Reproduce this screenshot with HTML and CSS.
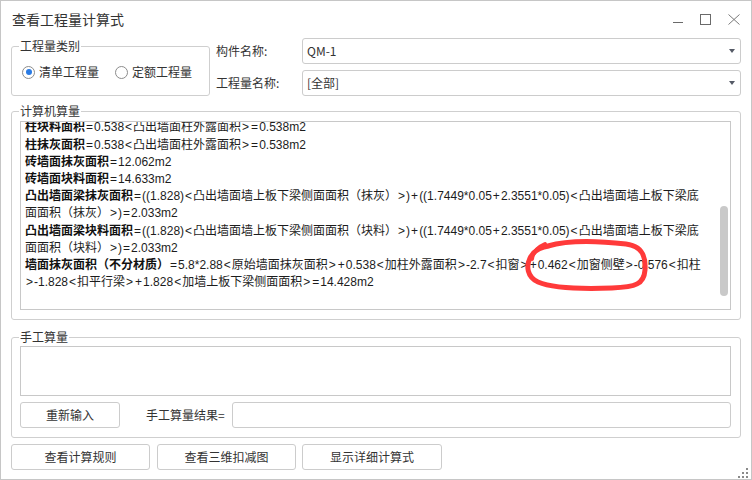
FILE: index.html
```html
<!DOCTYPE html>
<html lang="zh-CN">
<head>
<meta charset="utf-8">
<title>查看工程量计算式</title>
<link rel="stylesheet" href="styles.css">
</head>
<body>
<div class="window">
  <div class="titlebar">
    <span class="title">查看工程量计算式</span>
    <div class="controls">
      <svg class="ctl ctl-min" width="10" height="11" viewBox="0 0 10 11"><line x1="0" y1="8.5" x2="10" y2="8.5" stroke="#6a6a6a" stroke-width="1"/></svg>
      <svg class="ctl ctl-max" width="11" height="11" viewBox="0 0 11 11"><rect x="0.5" y="0.5" width="10" height="10" fill="none" stroke="#6a6a6a" stroke-width="1"/></svg>
      <svg class="ctl ctl-close" width="12" height="11" viewBox="0 0 12 11"><path d="M0.5 0.5 L11.5 10.5 M11.5 0.5 L0.5 10.5" stroke="#7a7a7a" stroke-width="1" fill="none"/></svg>
    </div>
  </div>

  <div class="content">
    <div class="top-row">
      <div class="group type-group">
        <span class="group-label">工程量类别</span>
        <div class="radio checked"><span class="circle"></span><span>清单工程量</span></div>
        <div class="radio"><span class="circle"></span><span>定额工程量</span></div>
      </div>
      <div class="fields">
        <div class="field">
          <span class="field-label">构件名称:</span>
          <div class="combo"><span class="combo-text">QM-1</span><span class="arrow"></span></div>
        </div>
        <div class="field">
          <span class="field-label">工程量名称:</span>
          <div class="combo"><span class="combo-text">[全部]</span><span class="arrow"></span></div>
        </div>
      </div>
    </div>

    <div class="group calc-group">
      <span class="group-label">计算机算量</span>
      <div class="calc-box">
        <div class="calc-text">
          <div class="line"><b>柱块料面积</b><i class="o">=</i>0.538<i class="o">&lt;</i>凸出墙面柱外露面积<i class="o">&gt;</i><i class="o">=</i>0.538m2</div>
          <div class="line"><b>柱抹灰面积</b><i class="o">=</i>0.538<i class="o">&lt;</i>凸出墙面柱外露面积<i class="o">&gt;</i><i class="o">=</i>0.538m2</div>
          <div class="line"><b>砖墙面抹灰面积</b><i class="o">=</i>12.062m2</div>
          <div class="line"><b>砖墙面块料面积</b><i class="o">=</i>14.633m2</div>
          <div class="line"><b>凸出墙面梁抹灰面积</b><i class="o">=</i>((1.828)<i class="o">&lt;</i>凸出墙面墙上板下梁侧面面积（抹灰）<i class="o">&gt;</i>)<i class="o">+</i>((1.7449*0.05<i class="o">+</i>2.3551*0.05)<i class="o">&lt;</i>凸出墙面墙上板下梁底<br>面面积（抹灰）<i class="o">&gt;</i>)<i class="o">=</i>2.033m2</div>
          <div class="line"><b>凸出墙面梁块料面积</b><i class="o">=</i>((1.828)<i class="o">&lt;</i>凸出墙面墙上板下梁侧面面积（块料）<i class="o">&gt;</i>)<i class="o">+</i>((1.7449*0.05<i class="o">+</i>2.3551*0.05)<i class="o">&lt;</i>凸出墙面墙上板下梁底<br>面面积（块料）<i class="o">&gt;</i>)<i class="o">=</i>2.033m2</div>
          <div class="line"><b>墙面抹灰面积（不分材质）</b><i class="o">=</i>5.8*2.88<i class="o">&lt;</i>原始墙面抹灰面积<i class="o">&gt;</i><i class="o">+</i>0.538<i class="o">&lt;</i>加柱外露面积<i class="o">&gt;</i>-2.7<i class="o">&lt;</i>扣窗<i class="o">&gt;</i><i class="o">+</i>0.462<i class="o">&lt;</i>加窗侧壁<i class="o">&gt;</i>-0.576<i class="o">&lt;</i>扣柱<br><i class="o">&gt;</i>-1.828<i class="o">&lt;</i>扣平行梁<i class="o">&gt;</i><i class="o">+</i>1.828<i class="o">&lt;</i>加墙上板下梁侧面面积<i class="o">&gt;</i><i class="o">=</i>14.428m2</div>
        </div>
        <div class="scroll-thumb"></div>
      </div>
    </div>

    <div class="group manual-group">
      <span class="group-label">手工算量</span>
      <div class="manual-area"></div>
      <div class="manual-row">
        <div class="btn btn-reset">重新输入</div>
        <span class="result-label">手工算量结果=</span>
        <div class="result-input"></div>
      </div>
    </div>

    <div class="bottom-buttons">
      <div class="btn btn-bottom">查看计算规则</div>
      <div class="btn btn-bottom">查看三维扣减图</div>
      <div class="btn btn-bottom btn-wide">显示详细计算式</div>
    </div>
  </div>

  <svg class="annotation" width="752" height="480" viewBox="0 0 752 480">
    <path d="M548 246 C568 240 600 241 626 244 C642 246 646 256 645 270 C644 284 636 287 612 288 C585 289 552 288 538 282 C527 277 526 266 530 258 C534 250 540 247 549 246" fill="none" stroke="#ff3a3a" stroke-width="5" stroke-linecap="round" stroke-linejoin="round"/>
    <path d="M545 244 C538 247 533 252 532 259" fill="none" stroke="#ff3a3a" stroke-width="4" stroke-linecap="round"/>
  </svg>

  <div class="grip">
    <span class="dot d1"></span><span class="dot d2"></span><span class="dot d3"></span>
    <span class="dot d4"></span><span class="dot d5"></span><span class="dot d6"></span>
  </div>
</div>
</body>
</html>
```

FILE: styles.css
```css
* { box-sizing: border-box; }

html, body {
  margin: 0;
  padding: 0;
  background: #ffffff;
}

body {
  font-family: "Noto Sans CJK SC", "Microsoft YaHei", "Noto Sans", sans-serif;
  font-size: 12px;
  color: #333333;
}

.window {
  position: relative;
  width: 752px;
  height: 480px;
  border: 1px solid #c6c6c6;
  background: #ffffff;
  overflow: hidden;
}

/* title bar */
.titlebar {
  height: 37px;
  display: flex;
  align-items: flex-start;
  padding: 0 11px 0 11px;
}

.title {
  font-size: 14px;
  line-height: 37px;
  color: #333333;
}

.controls {
  margin-left: auto;
  display: flex;
  align-items: flex-start;
  padding-top: 13px;
}

.ctl { display: block; }
.ctl-min { margin-right: 17px; }
.ctl-max { margin-right: 17px; }

/* content */
.content {
  padding: 0 10px;
}

.top-row {
  display: flex;
  height: 58px;
}

.group {
  position: relative;
  border: 1px solid #cfcfcf;
  border-radius: 3px;
}

.group-label {
  position: absolute;
  left: 7px;
  top: -9px;
  padding: 0 1px;
  background: #ffffff;
  line-height: 16px;
  color: #333333;
}

.type-group {
  margin-top: 8px;
  width: 199px;
  height: 50px;
  display: flex;
  align-items: center;
  padding: 2px 0 0 10px;
}

.radio {
  display: flex;
  align-items: center;
  line-height: 16px;
  color: #333333;
  margin-right: 16px;
}

.circle {
  position: relative;
  width: 13px;
  height: 13px;
  border: 1px solid #8c8c8c;
  border-radius: 50%;
  margin-right: 4px;
  background: #ffffff;
}

.radio.checked .circle::after {
  content: "";
  position: absolute;
  left: 2.5px;
  top: 2.5px;
  width: 6px;
  height: 6px;
  border-radius: 50%;
  background: #2a7be4;
}

.fields {
  margin-left: 6px;
  flex: 1;
  display: flex;
  flex-direction: column;
}

.field {
  display: flex;
  align-items: center;
  height: 26px;
  margin-bottom: 6px;
}

.field-label {
  width: 86px;
  line-height: 16px;
  color: #333333;
}

.combo {
  flex: 1;
  height: 26px;
  border: 1px solid #cccccc;
  border-radius: 3px;
  display: flex;
  align-items: center;
  padding: 0 4px 0 4px;
}

.combo-text {
  line-height: 16px;
  color: #333333;
  flex: 1;
}

.arrow {
  width: 0;
  height: 0;
  border-left: 3px solid transparent;
  border-right: 3px solid transparent;
  border-top: 4px solid #555a66;
  margin-right: 1px;
}

/* computer calculation */
.calc-group {
  margin-top: 15px;
  height: 209px;
  padding: 9px 9px 9px 8px;
}

.calc-box {
  position: relative;
  height: 189px;
  border: 1px solid #c8c8c8;
  overflow: hidden;
}

.calc-text {
  margin-top: -2.6px;
  padding-left: 4px;
  font-family: "Liberation Sans", "Noto Sans CJK SC", "Microsoft YaHei", sans-serif;
  line-height: 17.2px;
  font-size: 12px;
  color: #1c1c1c;
  white-space: nowrap;
}

.calc-text b {
  font-weight: 700;
  color: #111111;
}

.calc-text .o {
  font-style: normal;
  padding: 0 1px;
}

.scroll-thumb {
  position: absolute;
  right: 2px;
  top: 84px;
  width: 8px;
  height: 90px;
  border-radius: 4px;
  background: #c9c9c9;
}

/* manual */
.manual-group {
  margin-top: 17px;
  height: 101px;
  padding: 8px 9px 9px 8px;
}

.manual-area {
  height: 50px;
  border: 1px solid #c8c8c8;
}

.manual-row {
  display: flex;
  align-items: center;
  margin-top: 6px;
  height: 26px;
}

.btn {
  height: 26px;
  border: 1px solid #cccccc;
  border-radius: 3px;
  display: flex;
  align-items: center;
  justify-content: center;
  line-height: 16px;
  color: #333333;
  background: #ffffff;
}

.btn-reset {
  width: 100px;
}

.result-label {
  margin-left: 26px;
  width: 86px;
  line-height: 16px;
  color: #333333;
}

.result-input {
  flex: 1;
  height: 26px;
  border: 1px solid #cccccc;
  border-radius: 3px;
}

.bottom-buttons {
  display: flex;
  margin-top: 6px;
}

.btn-bottom {
  width: 139px;
  margin-right: 7px;
}

.btn-bottom:nth-child(2) {
  margin-right: 6px;
}

.btn-wide {
  width: 140px;
}

/* annotation overlay */
.annotation {
  position: absolute;
  left: -1px;
  top: -1px;
  pointer-events: none;
}

/* resize grip */
.grip {
  position: absolute;
  right: 1px;
  bottom: 1px;
  width: 11px;
  height: 11px;
}

.dot {
  position: absolute;
  width: 2px;
  height: 2px;
  background: #8a8a8a;
}

.d1 { right: 2px; top: 1px; }
.d2 { right: 2px; top: 5px; }
.d3 { right: 6px; top: 5px; }
.d4 { right: 2px; top: 9px; }
.d5 { right: 6px; top: 9px; }
.d6 { right: 10px; top: 9px; }
```
